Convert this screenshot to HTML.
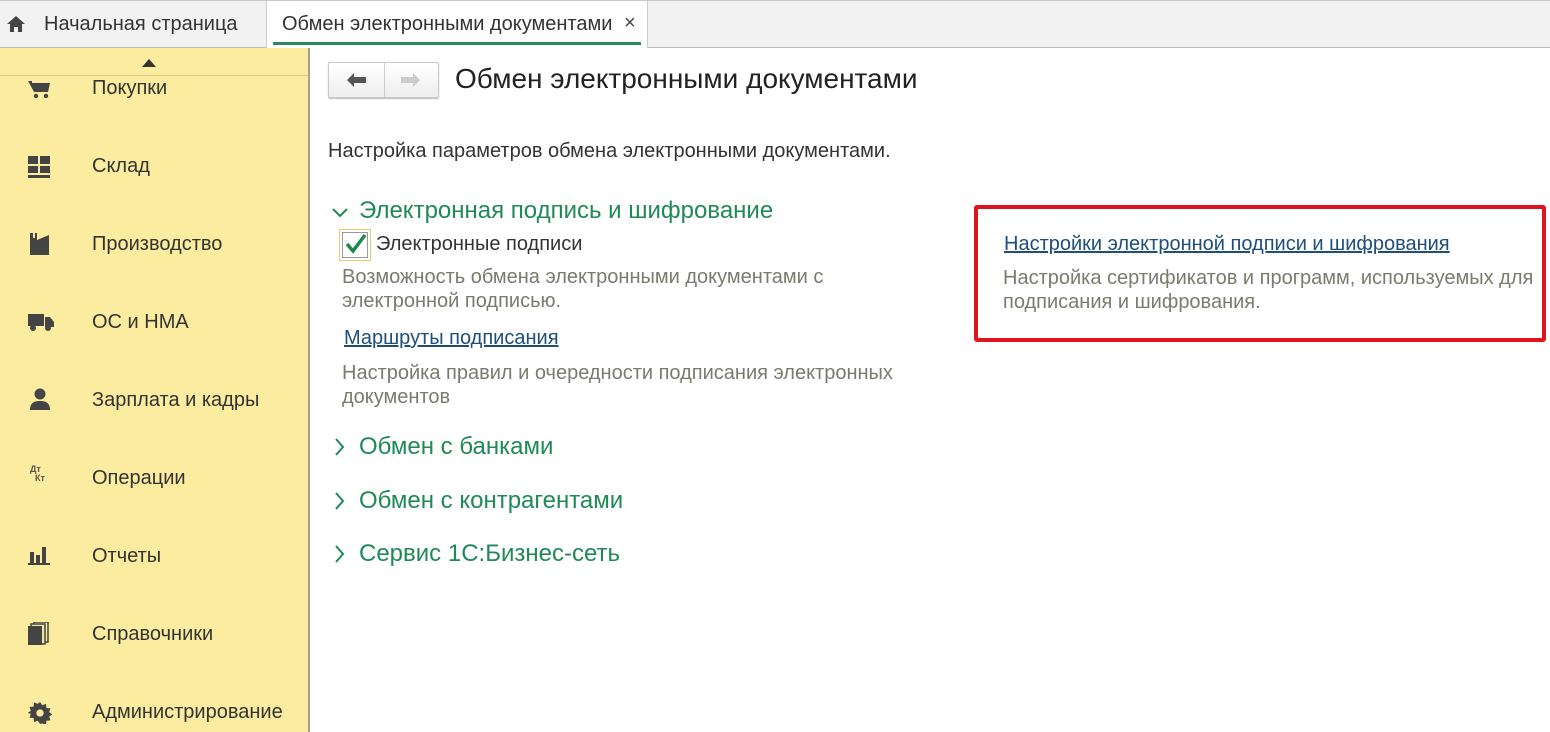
<!DOCTYPE html>
<html><head><meta charset="utf-8"><style>
*{margin:0;padding:0;box-sizing:border-box}
body{width:1550px;height:732px;overflow:hidden;background:#fff;font-family:"Liberation Sans",Arial,sans-serif;position:relative;color:#333}
.tabs{position:absolute;left:0;top:0;width:1550px;height:48px;background:#f2f2f2;border-top:1px solid #c8c8c8;border-bottom:1px solid #bdbdbd}
.t1{position:absolute;left:44px;top:12px;font-size:20px;color:#333}
.t2{position:absolute;left:266px;top:0;width:382px;height:47px;background:#fff;border-left:1px solid #ccc;border-right:1px solid #ccc}
.t2 span{position:absolute;left:15px;top:12px;font-size:20px;color:#333}
.t2 i{position:absolute;left:357px;top:11px;font-style:normal;font-size:20px;color:#444}
.t2 b{position:absolute;left:6px;right:6px;bottom:3px;height:3px;background:#2a8a5b}
.side{position:absolute;left:0;top:48px;width:310px;height:684px;background:#fbec9f;border-right:2px solid #a8a08a}
.sep{position:absolute;left:0;top:27px;width:308px;height:1px;background:#d7c98a}
.it{position:absolute;left:92px;font-size:20px;color:#333}
.ic{position:absolute;left:28px}
h1{position:absolute;left:455px;top:63px;font-size:28px;font-weight:normal;color:#222}
.nav{position:absolute;left:328px;top:62px;width:111px;height:36px;border:1px solid #c9c9c9;border-radius:2px;background:linear-gradient(#fff,#eee);box-shadow:0 1px 1px #bbb}
.nav div{position:absolute;left:55px;top:0;width:1px;height:34px;background:#ccc}
.p{position:absolute;font-size:20px}
.g{color:#7a7a6e}
.h{color:#1f8a57;font-size:24px}
.lnk{color:#1e4e7a;text-decoration:underline}
.red{position:absolute;left:974px;top:205px;width:572px;height:137px;border:4px solid #e0141c;border-radius:3px}
</style></head><body>
<div class="tabs">
<svg style="position:absolute;left:6px;top:14px" width="20" height="18" viewBox="0 0 20 18"><path d="M10 1L1 9h3v8h4v-5h4v5h4V9h3z" fill="#444"/></svg>
<div class="t1">Начальная страница</div>
<div class="t2"><span>Обмен электронными документами</span><i>×</i><b></b></div>
</div>
<div class="side">
<svg style="position:absolute;left:142px;top:11px" width="14" height="8"><path d="M0 8L7 0L14 8z" fill="#333"/></svg>
<div class="sep"></div>
</div>
<svg class="ic" style="top:80px" width="24" height="20" viewBox="0 0 24 20"><path d="M0 1h4v2h18l-2 9H6z" fill="#444"/><circle cx="8" cy="16" r="2.2" fill="#444"/><circle cx="18" cy="16" r="2.2" fill="#444"/></svg>
<div class="it" style="top:77px">Покупки</div>
<svg class="ic" style="top:156px" width="24" height="22"><rect x="0" y="0" width="10" height="8" fill="#444"/><rect x="12" y="0" width="10" height="8" fill="#444"/><rect x="0" y="10" width="10" height="7" fill="#444"/><rect x="12" y="10" width="10" height="7" fill="#444"/><rect x="0" y="19" width="22" height="3" fill="#444"/></svg>
<div class="it" style="top:155px">Склад</div>
<svg class="ic" style="top:233px" width="24" height="22"><path d="M2 0h3v5h2V0h2v7l12-5v20H2z" fill="#444"/></svg>
<div class="it" style="top:233px">Производство</div>
<svg class="ic" style="top:314px" width="26" height="18"><rect x="0" y="0" width="16" height="12" fill="#444"/><path d="M17 3h5l4 5v5H17z" fill="#444"/><circle cx="5" cy="14" r="3" fill="#444"/><circle cx="20" cy="14" r="3" fill="#444"/></svg>
<div class="it" style="top:311px">ОС и НМА</div>
<svg class="ic" style="top:388px" width="24" height="22"><circle cx="12" cy="6" r="5.5" fill="#444"/><path d="M2 22c0-7 4-9 10-9s10 2 10 9z" fill="#444"/></svg>
<div class="it" style="top:389px">Зарплата и кадры</div>
<div style="position:absolute;left:30px;top:465px;font-size:9px;font-weight:bold;color:#555;line-height:9px">Дт<br>&nbsp;&nbsp;Кт</div>
<div class="it" style="top:467px">Операции</div>
<svg class="ic" style="top:547px" width="24" height="18"><rect x="2" y="5" width="4" height="11" fill="#444"/><rect x="8" y="8" width="4" height="8" fill="#444"/><rect x="14" y="0" width="4" height="16" fill="#444"/><rect x="0" y="16" width="22" height="2" fill="#444"/></svg>
<div class="it" style="top:545px">Отчеты</div>
<svg class="ic" style="top:622px" width="24" height="24"><rect x="6" y="0" width="14" height="20" fill="none" stroke="#444" stroke-width="1.5"/><rect x="3" y="2" width="14" height="20" fill="#f0e5a0" stroke="#444" stroke-width="1.5"/><rect x="0" y="4" width="14" height="19" fill="#444"/></svg>
<div class="it" style="top:623px">Справочники</div>
<svg class="ic" style="top:702px" width="24" height="22" viewBox="0 0 24 24"><path d="M12 0l2.5 3.5 4-1.5.5 4.5 4.5.5-1.5 4 3.5 2.5-3.5 2.5 1.5 4-4.5.5-.5 4.5-4-1.5L12 24l-2.5-3.5-4 1.5-.5-4.5-4.5-.5 1.5-4L-1.5 12 2 9.5.5 5.5 5 5l.5-4.5 4 1.5z" fill="#444"/><circle cx="12" cy="12" r="4" fill="#fbec9f"/></svg>
<div class="it" style="top:701px">Администрирование</div>

<div class="nav"><div></div>
<svg style="position:absolute;left:18px;top:10px" width="20" height="14"><path d="M0 7l7-7v4h12v6H7v4z" fill="#555"/></svg>
<svg style="position:absolute;left:71px;top:10px" width="20" height="14"><path d="M20 7l-7-7v4H1v6h12v4z" fill="#ccc"/></svg>
</div>
<h1>Обмен электронными документами</h1>
<div class="p" style="left:328px;top:140px;color:#333">Настройка параметров обмена электронными документами.</div>
<svg style="position:absolute;left:332px;top:207px" width="16" height="12"><path d="M1 2l7 7 7-7" fill="none" stroke="#1f8a57" stroke-width="2"/></svg>
<div class="p h" style="left:359px;top:197px">Электронная подпись и шифрование</div>
<div style="position:absolute;left:339px;top:229px;width:32px;height:32px;border:1px solid #e0d070;background:#fff"></div>
<div style="position:absolute;left:342px;top:232px;width:26px;height:26px;border:1px solid #999"></div>
<svg style="position:absolute;left:345px;top:233px" width="22" height="22"><path d="M2 11l6 7L20 2" fill="none" stroke="#1b8a4f" stroke-width="3.5"/></svg>
<div class="p" style="left:376px;top:233px;color:#333">Электронные подписи</div>
<div class="p g" style="left:342px;top:265px;line-height:24px">Возможность обмена электронными документами с<br>электронной подписью.</div>
<div class="p lnk" style="left:344px;top:327px">Маршруты подписания</div>
<div class="p g" style="left:342px;top:361px;line-height:24px">Настройка правил и очередности подписания электронных<br>документов</div>
<svg style="position:absolute;left:334px;top:438px" width="12" height="18"><path d="M2 1l7 8-7 8" fill="none" stroke="#1f8a57" stroke-width="2"/></svg>
<div class="p h" style="left:359px;top:433px">Обмен с банками</div>
<svg style="position:absolute;left:334px;top:492px" width="12" height="18"><path d="M2 1l7 8-7 8" fill="none" stroke="#1f8a57" stroke-width="2"/></svg>
<div class="p h" style="left:359px;top:487px">Обмен с контрагентами</div>
<svg style="position:absolute;left:334px;top:545px" width="12" height="18"><path d="M2 1l7 8-7 8" fill="none" stroke="#1f8a57" stroke-width="2"/></svg>
<div class="p h" style="left:359px;top:540px">Сервис 1С:Бизнес-сеть</div>

<div class="red"></div>
<div class="p lnk" style="left:1004px;top:233px">Настройки электронной подписи и шифрования</div>
<div class="p g" style="left:1003px;top:266px;line-height:24px">Настройка сертификатов и программ, используемых для<br>подписания и шифрования.</div>
</body></html>
